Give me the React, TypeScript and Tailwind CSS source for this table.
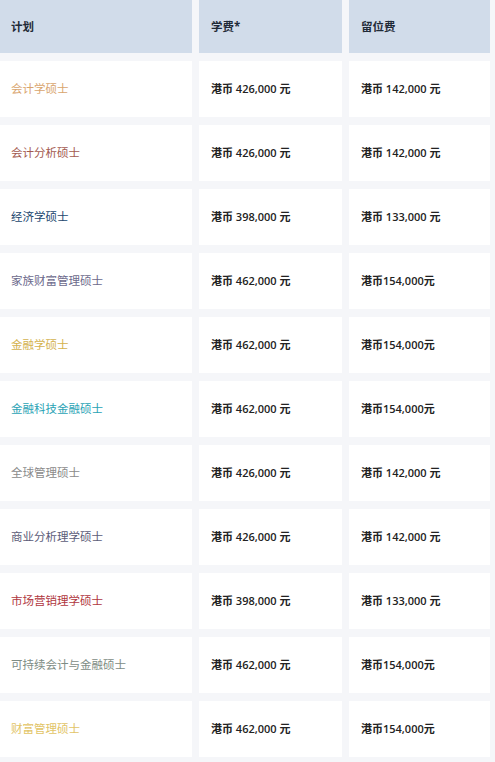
import React from 'react';

const rows = [
  { name: '会计学硕士', color: 'text-[#d9a56e]', fee: '港币 426,000 元', deposit: '港币 142,000 元' },
  { name: '会计分析硕士', color: 'text-[#a35a50]', fee: '港币 426,000 元', deposit: '港币 142,000 元' },
  { name: '经济学硕士', color: 'text-[#22476e]', fee: '港币 398,000 元', deposit: '港币 133,000 元' },
  { name: '家族财富管理硕士', color: 'text-[#6c6a8c]', fee: '港币 462,000 元', deposit: '港币154,000元' },
  { name: '金融学硕士', color: 'text-[#d4b24e]', fee: '港币 462,000 元', deposit: '港币154,000元' },
  { name: '金融科技金融硕士', color: 'text-[#2aa3b5]', fee: '港币 462,000 元', deposit: '港币154,000元' },
  { name: '全球管理硕士', color: 'text-[#8a8a8a]', fee: '港币 426,000 元', deposit: '港币 142,000 元' },
  { name: '商业分析理学硕士', color: 'text-[#5c5c78]', fee: '港币 426,000 元', deposit: '港币 142,000 元' },
  { name: '市场营销理学硕士', color: 'text-[#b0363e]', fee: '港币 398,000 元', deposit: '港币 133,000 元' },
  { name: '可持续会计与金融硕士', color: 'text-[#7d8c84]', fee: '港币 462,000 元', deposit: '港币154,000元' },
  { name: '财富管理硕士', color: 'text-[#e2c466]', fee: '港币 462,000 元', deposit: '港币154,000元' },
];

const font = { fontFamily: '"Open Sans", "Noto Sans CJK SC", sans-serif' };

export default function App() {
  return (
    <div className="w-[495px] h-[762px] overflow-hidden bg-[#f5f6f9]" style={font}>
      <div className="grid grid-cols-[192px_143px_141px] gap-x-[7px] gap-y-[8px]">
        {/* Header */}
        <div className="h-[53px] bg-[#d1dcea] flex items-center pl-[11px] text-[11.5px] font-bold text-[#1f2a37]">计划</div>
        <div className="h-[53px] bg-[#d1dcea] flex items-center pl-[12px] text-[11.5px] font-bold text-[#1f2a37]">学费*</div>
        <div className="h-[53px] bg-[#d1dcea] flex items-center pl-[12px] text-[11.5px] font-bold text-[#1f2a37]">留位费</div>

        {rows.map((r) => (
          <React.Fragment key={r.name}>
            <div className={`h-[56px] bg-white flex items-center pl-[11px] text-[11.5px] ${r.color}`}>{r.name}</div>
            <div className="h-[56px] bg-white flex items-center pl-[12px] text-[11px] font-semibold text-[#222]">{r.fee}</div>
            <div className="h-[56px] bg-white flex items-center pl-[12px] text-[11px] font-semibold text-[#222]">{r.deposit}</div>
          </React.Fragment>
        ))}
      </div>
    </div>
  );
}
